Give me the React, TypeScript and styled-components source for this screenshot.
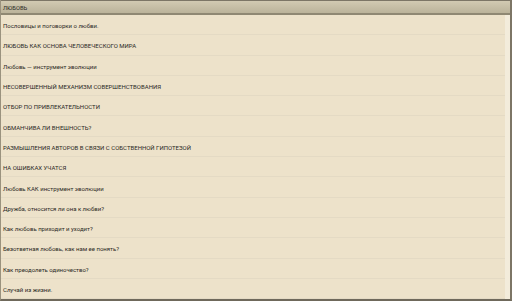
import React from 'react';
import styled, { createGlobalStyle } from 'styled-components';

const GlobalStyle = createGlobalStyle`
  html, body {
    margin: 0;
    padding: 0;
    background: #ede2ca;
  }
  * {
    box-sizing: border-box;
  }
`;

const Screen = styled.div`
  width: 512px;
  height: 301px;
  display: flex;
  flex-direction: column;
  background: #ede2ca;
  border-left: 1px solid #9a927e;
  border-right: 2px solid #7d7666;
  border-bottom: 2px solid #6f695b;
  overflow: hidden;
  font-family: Roboto, 'Liberation Sans', sans-serif;
`;

const TitleBar = styled.div`
  height: 15px;
  flex: none;
  display: flex;
  align-items: center;
  padding: 1px 0 0 2px;
  background: linear-gradient(#d2cab2, #bbb39a);
  border-top: 1px solid #7d7666;
  border-bottom: 2px solid #8f8873;
  font-size: 5.8px;
  color: #2c2a26;
`;

const List = styled.ul`
  flex: 1;
  margin: 0;
  padding: 0;
  list-style: none;
  border-right: 5px solid #f3ecdb;
`;

const Row = styled.li`
  height: 20.3px;
  display: flex;
  align-items: center;
  padding: 2px 0 0 2px;
  font-size: 6px;
  color: #2b2925;
  border-bottom: 1px solid #e4dac4;
  white-space: nowrap;
`;

const items = [
  'Пословицы и поговорки о любви.',
  'ЛЮБОВЬ КАК ОСНОВА ЧЕЛОВЕЧЕСКОГО МИРА',
  'Любовь — инструмент эволюции',
  'НЕСОВЕРШЕННЫЙ МЕХАНИЗМ СОВЕРШЕНСТВОВАНИЯ',
  'ОТБОР ПО ПРИВЛЕКАТЕЛЬНОСТИ',
  'ОБМАНЧИВА ЛИ ВНЕШНОСТЬ?',
  'РАЗМЫШЛЕНИЯ АВТОРОВ В СВЯЗИ С СОБСТВЕННОЙ ГИПОТЕЗОЙ',
  'НА ОШИБКАХ УЧАТСЯ',
  'Любовь КАК инструмент эволюции',
  'Дружба, относится ли она к любви?',
  'Как любовь приходит и уходит?',
  'Безответная любовь, как нам ее понять?',
  'Как преодолеть одиночество?',
  'Случай из жизни.',
];

export default function App() {
  return (
    <>
      <GlobalStyle />
      <Screen>
        <TitleBar>ЛЮБОВЬ</TitleBar>
        <List>
          {items.map(x => (
            <Row key={x}>{x}</Row>
          ))}
        </List>
      </Screen>
    </>
  );
}
